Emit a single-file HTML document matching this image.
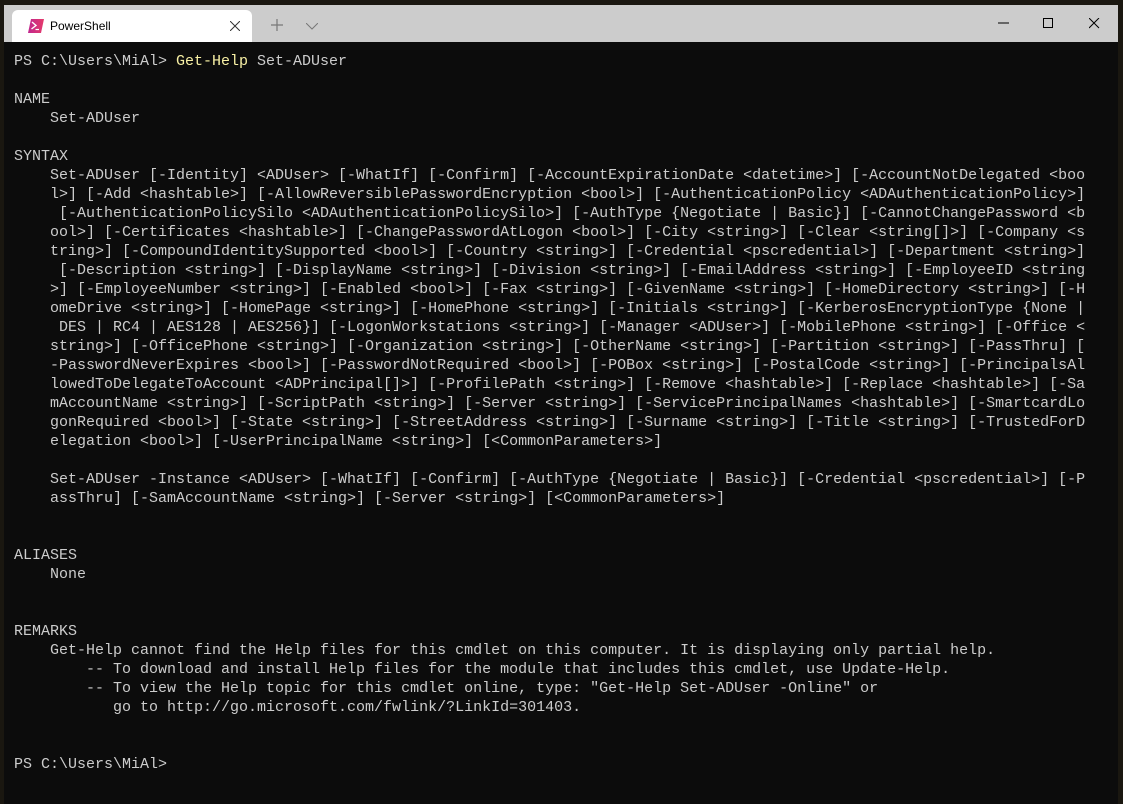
<!DOCTYPE html>
<html><head><meta charset="utf-8"><style>
html,body{margin:0;padding:0;width:1123px;height:804px;overflow:hidden;background:#1a1710;}
.win{position:absolute;left:4px;top:5px;width:1114px;height:799px;background:#0c0c0c;}
.tb{position:absolute;left:0;top:0;width:1114px;height:37px;background:#cccccc;}
.tab{position:absolute;left:8px;top:5px;width:240px;height:32px;background:#fff;border-radius:6px 6px 0 0;}
.tab .t{position:absolute;left:38px;top:9px;font:12px "Liberation Sans",sans-serif;color:#000;}
pre{position:absolute;left:10px;top:47px;margin:0;font-family:"Liberation Mono",monospace;font-size:15px;line-height:19px;color:#cccccc;}
.y{color:#f9f1a5}
</style></head><body>
<div class="win">
<div class="tb">
<div class="tab">
<svg style="position:absolute;left:16px;top:9px" width="16" height="14" viewBox="0 0 16 14"><defs><linearGradient id="g" x1="0" x2="1"><stop offset="0" stop-color="#c0278f"/><stop offset="1" stop-color="#e53a6a"/></linearGradient></defs><polygon points="3,0 16,0 13,14 0,14" fill="url(#g)"/><path d="M4,3 L8,6.5 L3.5,10" stroke="#fff" stroke-width="1.4" fill="none"/><path d="M7.5,10.5 H11" stroke="#fff" stroke-width="1.2"/></svg>
<div class="t">PowerShell</div>
<svg style="position:absolute;left:218px;top:11px" width="10" height="10"><path d="M0,0L10,10M10,0L0,10" stroke="#333" stroke-width="1"/></svg>
</div>
<svg style="position:absolute;left:267px;top:14px" width="12" height="12"><path d="M6,0V12M0,6H12" stroke="#777" stroke-width="1.2"/></svg>
<svg style="position:absolute;left:302px;top:18px" width="12" height="7"><path d="M0,0L6,6L12,0" stroke="#777" stroke-width="1" fill="none"/></svg>
<svg style="position:absolute;left:994px;top:17px" width="11" height="2"><path d="M0,1H11" stroke="#000"/></svg>
<svg style="position:absolute;left:1039px;top:13px" width="11" height="11"><rect x="0.5" y="0.5" width="9" height="9" stroke="#000" fill="none"/></svg>
<svg style="position:absolute;left:1085px;top:13px" width="11" height="11"><path d="M0,0L10,10M10,0L0,10" stroke="#000"/></svg>
</div>
<pre>PS C:\Users\MiAl> <span class="y">Get-Help</span> Set-ADUser

NAME
    Set-ADUser

SYNTAX
    Set-ADUser [-Identity] &lt;ADUser&gt; [-WhatIf] [-Confirm] [-AccountExpirationDate &lt;datetime&gt;] [-AccountNotDelegated &lt;boo
    l&gt;] [-Add &lt;hashtable&gt;] [-AllowReversiblePasswordEncryption &lt;bool&gt;] [-AuthenticationPolicy &lt;ADAuthenticationPolicy&gt;]
     [-AuthenticationPolicySilo &lt;ADAuthenticationPolicySilo&gt;] [-AuthType {Negotiate | Basic}] [-CannotChangePassword &lt;b
    ool&gt;] [-Certificates &lt;hashtable&gt;] [-ChangePasswordAtLogon &lt;bool&gt;] [-City &lt;string&gt;] [-Clear &lt;string[]&gt;] [-Company &lt;s
    tring&gt;] [-CompoundIdentitySupported &lt;bool&gt;] [-Country &lt;string&gt;] [-Credential &lt;pscredential&gt;] [-Department &lt;string&gt;]
     [-Description &lt;string&gt;] [-DisplayName &lt;string&gt;] [-Division &lt;string&gt;] [-EmailAddress &lt;string&gt;] [-EmployeeID &lt;string
    &gt;] [-EmployeeNumber &lt;string&gt;] [-Enabled &lt;bool&gt;] [-Fax &lt;string&gt;] [-GivenName &lt;string&gt;] [-HomeDirectory &lt;string&gt;] [-H
    omeDrive &lt;string&gt;] [-HomePage &lt;string&gt;] [-HomePhone &lt;string&gt;] [-Initials &lt;string&gt;] [-KerberosEncryptionType {None |
     DES | RC4 | AES128 | AES256}] [-LogonWorkstations &lt;string&gt;] [-Manager &lt;ADUser&gt;] [-MobilePhone &lt;string&gt;] [-Office &lt;
    string&gt;] [-OfficePhone &lt;string&gt;] [-Organization &lt;string&gt;] [-OtherName &lt;string&gt;] [-Partition &lt;string&gt;] [-PassThru] [
    -PasswordNeverExpires &lt;bool&gt;] [-PasswordNotRequired &lt;bool&gt;] [-POBox &lt;string&gt;] [-PostalCode &lt;string&gt;] [-PrincipalsAl
    lowedToDelegateToAccount &lt;ADPrincipal[]&gt;] [-ProfilePath &lt;string&gt;] [-Remove &lt;hashtable&gt;] [-Replace &lt;hashtable&gt;] [-Sa
    mAccountName &lt;string&gt;] [-ScriptPath &lt;string&gt;] [-Server &lt;string&gt;] [-ServicePrincipalNames &lt;hashtable&gt;] [-SmartcardLo
    gonRequired &lt;bool&gt;] [-State &lt;string&gt;] [-StreetAddress &lt;string&gt;] [-Surname &lt;string&gt;] [-Title &lt;string&gt;] [-TrustedForD
    elegation &lt;bool&gt;] [-UserPrincipalName &lt;string&gt;] [&lt;CommonParameters&gt;]

    Set-ADUser -Instance &lt;ADUser&gt; [-WhatIf] [-Confirm] [-AuthType {Negotiate | Basic}] [-Credential &lt;pscredential&gt;] [-P
    assThru] [-SamAccountName &lt;string&gt;] [-Server &lt;string&gt;] [&lt;CommonParameters&gt;]


ALIASES
    None


REMARKS
    Get-Help cannot find the Help files for this cmdlet on this computer. It is displaying only partial help.
        -- To download and install Help files for the module that includes this cmdlet, use Update-Help.
        -- To view the Help topic for this cmdlet online, type: "Get-Help Set-ADUser -Online" or
           go to http://go.microsoft.com/fwlink/?LinkId=301403.


PS C:\Users\MiAl></pre>
</div>
</body></html>
